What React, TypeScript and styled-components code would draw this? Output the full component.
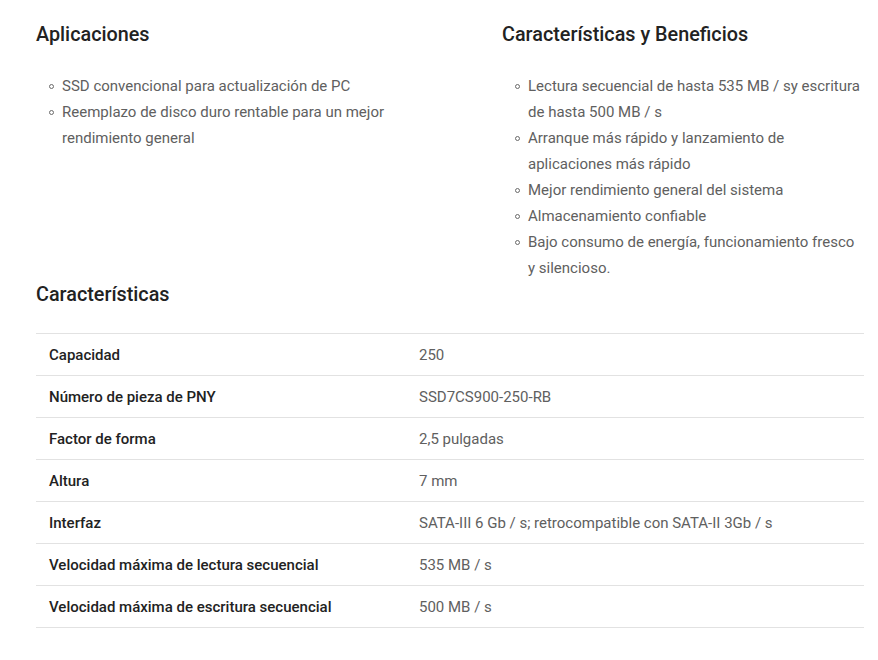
import React from 'react';
import styled, { createGlobalStyle } from 'styled-components';

const GlobalStyle = createGlobalStyle`
  body {
    margin: 0;
    background: #fff;
    font-family: Roboto, "Liberation Sans", Arial, sans-serif;
  }
`;

const Page = styled.div`
  width: 828px;
  padding: 21px 36px 0;
`;

const Columns = styled.div`
  display: grid;
  grid-template-columns: 362px 362px;
  column-gap: 104px;
`;

const Heading = styled.h2`
  margin: 0;
  font-size: 19.8px;
  font-weight: 500;
  line-height: 28px;
  color: #222;
`;

const BulletList = styled.ul`
  list-style: none;
  margin: 24px 0 0;
  padding: 0 0 0 26px;
  font-size: 15px;
  line-height: 26px;
  color: #606060;
`;

const Bullet = styled.li`
  position: relative;

  &::before {
    content: '';
    position: absolute;
    left: -13px;
    top: 11px;
    width: 3px;
    height: 3px;
    border: 1px solid #6a6a6a;
    border-radius: 50%;
  }
`;

const SpecTable = styled.table`
  width: 100%;
  margin-top: 24px;
  border-collapse: collapse;
  font-size: 15px;
`;

const Row = styled.tr`
  border-top: 1px solid #e2e2e2;
  border-bottom: 1px solid #e2e2e2;
`;

const Label = styled.td`
  box-sizing: border-box;
  width: 370px;
  height: 42px;
  padding: 0 0 0 13px;
  font-weight: 500;
  color: #222;
`;

const Value = styled.td`
  padding: 0 0 0 13px;
  color: #606060;
`;

const aplicaciones = [
  'SSD convencional para actualización de PC',
  'Reemplazo de disco duro rentable para un mejor rendimiento general',
];

const beneficios = [
  'Lectura secuencial de hasta 535 MB / sy escritura de hasta 500 MB / s',
  'Arranque más rápido y lanzamiento de aplicaciones más rápido',
  'Mejor rendimiento general del sistema',
  'Almacenamiento confiable',
  'Bajo consumo de energía, funcionamiento fresco y silencioso.',
];

const specs: [string, string][] = [
  ['Capacidad', '250'],
  ['Número de pieza de PNY', 'SSD7CS900-250-RB'],
  ['Factor de forma', '2,5 pulgadas'],
  ['Altura', '7 mm'],
  ['Interfaz', 'SATA-III 6 Gb / s; retrocompatible con SATA-II 3Gb / s'],
  ['Velocidad máxima de lectura secuencial', '535 MB / s'],
  ['Velocidad máxima de escritura secuencial', '500 MB / s'],
];

export default function App() {
  return (
    <>
      <GlobalStyle />
      <Page>
        <Columns>
          <div>
            <Heading>Aplicaciones</Heading>
            <BulletList>
              {aplicaciones.map((item) => (
                <Bullet key={item}>{item}</Bullet>
              ))}
            </BulletList>
          </div>
          <div>
            <Heading>Características y Beneficios</Heading>
            <BulletList>
              {beneficios.map((item) => (
                <Bullet key={item}>{item}</Bullet>
              ))}
            </BulletList>
          </div>
        </Columns>
        <Heading>Características</Heading>
        <SpecTable>
          <tbody>
            {specs.map(([label, value]) => (
              <Row key={label}>
                <Label>{label}</Label>
                <Value>{value}</Value>
              </Row>
            ))}
          </tbody>
        </SpecTable>
      </Page>
    </>
  );
}
